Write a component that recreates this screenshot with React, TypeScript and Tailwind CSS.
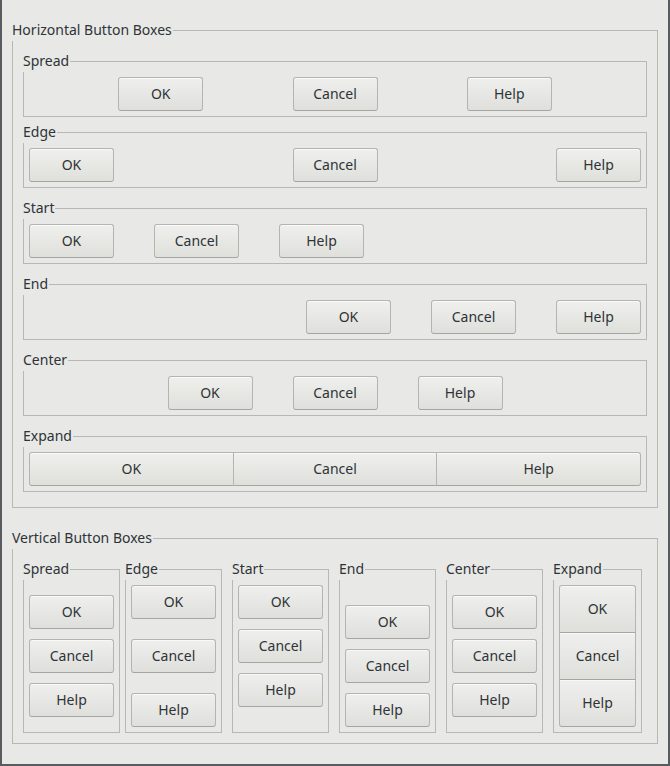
import { ReactNode } from "react";
import clsx from "clsx";

const labels = ["OK", "Cancel", "Help"];

function Frame({ label, children, className, bodyClass }: { label: string; children: ReactNode; className?: string; bodyClass?: string }) {
    return (
        <div className={clsx("flex flex-col", className)}>
            <div className="flex h-[21px]">
                <span className="leading-[19px] whitespace-nowrap">{label}</span>
                <div className="flex-1 h-[11px] self-end border-t border-r border-[#b7b7b4] ml-px" />
            </div>
            <div className={clsx("flex-1 border-x border-b border-[#b7b7b4]", bodyClass)}>{children}</div>
        </div>
    );
}

function Btn({ text, className }: { text: string; className?: string }) {
    return (
        <button
            className={clsx(
                "flex items-center justify-center pb-px border border-[#b4b4b0] border-b-[#a5a5a2] bg-gradient-to-b from-[#efefed] to-[#dfdfdc] shadow-[inset_0_1px_0_rgba(255,255,255,0.6)] text-[#2e3436]",
                className
            )}
        >
            {text}
        </button>
    );
}

function HBox({ label, justify, className }: { label: string; justify: string; className?: string }) {
    return (
        <Frame label={label} className={className} bodyClass={clsx("flex px-[5px] py-[5px]", justify)}>
            {labels.map((t) => (
                <Btn key={t} text={t} className="w-[85px] h-[34px] rounded-[3px]" />
            ))}
        </Frame>
    );
}

function VBox({ label, justify, className }: { label: string; justify: string; className?: string }) {
    return (
        <Frame label={label} className={className} bodyClass={clsx("flex flex-col p-[5px]", justify)}>
            {labels.map((t) => (
                <Btn key={t} text={t} className="w-full h-[34px] rounded-[3px]" />
            ))}
        </Frame>
    );
}

export default function App() {
    return (
        <div
            className="w-[670px] h-[766px] bg-[#585c5e] pl-[2px] pr-[2px] pb-[2px] text-[14px] text-[#2e3436]"
            style={{ fontFamily: '"Noto Sans", "DejaVu Sans", sans-serif' }}
        >
            <div className="h-full bg-[#e8e8e7] px-[10px] py-[20px] flex flex-col">
                <Frame label="Horizontal Button Boxes" bodyClass="p-[10px] flex flex-col">
                    <HBox label="Spread" justify="justify-evenly" />
                    <HBox label="Edge" justify="justify-between" className="mt-[5px]" />
                    <HBox label="Start" justify="justify-start gap-10" className="mt-[10px]" />
                    <HBox label="End" justify="justify-end gap-10" className="mt-[10px]" />
                    <HBox label="Center" justify="justify-center gap-10" className="mt-[10px]" />
                    <Frame label="Expand" className="mt-[10px] mb-[5px]" bodyClass="flex p-[5px]">
                        <Btn text="OK" className="flex-1 h-[34px] rounded-l-[3px]" />
                        <Btn text="Cancel" className="flex-1 h-[34px] border-l-0" />
                        <Btn text="Help" className="flex-1 h-[34px] border-l-0 rounded-r-[3px]" />
                    </Frame>
                </Frame>
                <Frame label="Vertical Button Boxes" className="mt-[20px]" bodyClass="p-[10px] flex">
                    <VBox label="Spread" justify="justify-evenly" className="w-[97px] h-[174px]" />
                    <VBox label="Edge" justify="justify-between" className="w-[97px] h-[174px] ml-[5px]" />
                    <VBox label="Start" justify="justify-start gap-[10px]" className="w-[97px] h-[174px] ml-[10px]" />
                    <VBox label="End" justify="justify-end gap-[10px]" className="w-[97px] h-[174px] ml-[10px]" />
                    <VBox label="Center" justify="justify-center gap-[10px]" className="w-[97px] h-[174px] ml-[10px]" />
                    <Frame label="Expand" className="w-[89px] h-[174px] ml-[10px]" bodyClass="flex flex-col p-[5px]">
                        <Btn text="OK" className="flex-1 w-full rounded-t-[3px]" />
                        <Btn text="Cancel" className="flex-1 w-full border-t-0" />
                        <Btn text="Help" className="flex-1 w-full border-t-0 rounded-b-[3px]" />
                    </Frame>
                </Frame>
            </div>
        </div>
    );
}
